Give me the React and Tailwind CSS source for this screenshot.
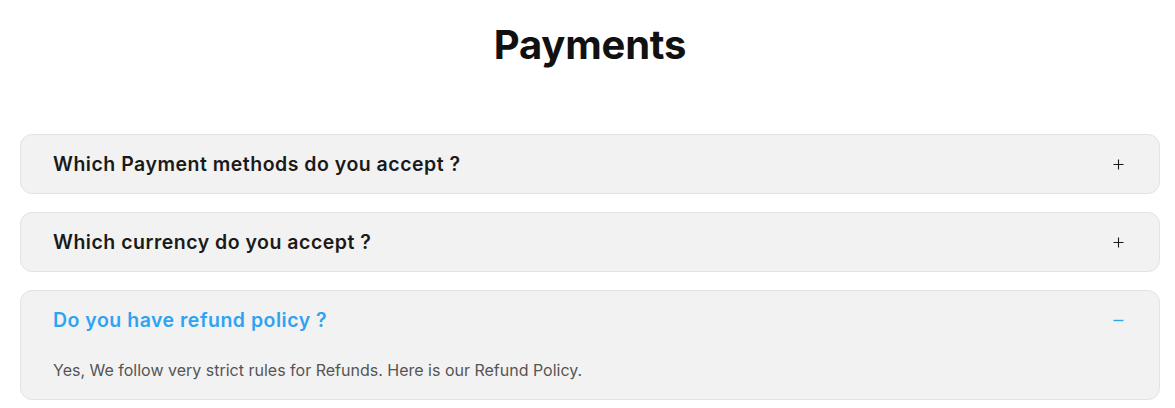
import React from "react";

const items = [
  { q: "Which Payment methods do you accept ?", open: false },
  { q: "Which currency do you accept ?", open: false },
  {
    q: "Do you have refund policy ?",
    open: true,
    a: "Yes, We follow very strict rules for Refunds. Here is our Refund Policy.",
  },
];

function Plus() {
  return (
    <svg width="11" height="11" viewBox="0 0 11 11" className="block">
      <path d="M5.5 0.5v10M0.5 5.5h10" stroke="#1a1a1a" strokeWidth="1.1" fill="none" />
    </svg>
  );
}

function Minus() {
  return (
    <svg width="11" height="11" viewBox="0 0 11 11" className="block">
      <path d="M0.5 5.5h10" stroke="#2ea3f2" strokeWidth="1.4" fill="none" />
    </svg>
  );
}

export default function App() {
  return (
    <div
      className="bg-white w-[1175px] h-[408px] overflow-hidden pl-5 pr-[15px]"
      style={{ fontFamily: "Inter, 'Noto Sans', sans-serif" }}
    >
      <h1 className="text-center text-[40px] font-bold text-[#111111] leading-[48px] pt-[21px] tracking-[-0.2px]">
        Payments
      </h1>
      <div className="mt-[65px] flex flex-col gap-[18px]">
        {items.map((it) => (
          <div
            key={it.q}
            className="bg-[#f2f2f2] border border-[#e3e3e3] rounded-[12px]"
          >
            <div className="h-[58px] flex items-center justify-between pl-8 pr-[35px]">
              <span
                className={
                  "text-[19.5px] font-semibold tracking-[0.5px] pt-[1px] " +
                  (it.open ? "text-[#2ea3f2]" : "text-[#1a1a1a]")
                }
              >
                {it.q}
              </span>
              {it.open ? <Minus /> : <Plus />}
            </div>
            {it.open && (
              <div className="pl-8 pr-8 pt-[9px] pb-[17px] text-[16px] leading-6 text-[#555555]">
                {it.a}
              </div>
            )}
          </div>
        ))}
      </div>
    </div>
  );
}
